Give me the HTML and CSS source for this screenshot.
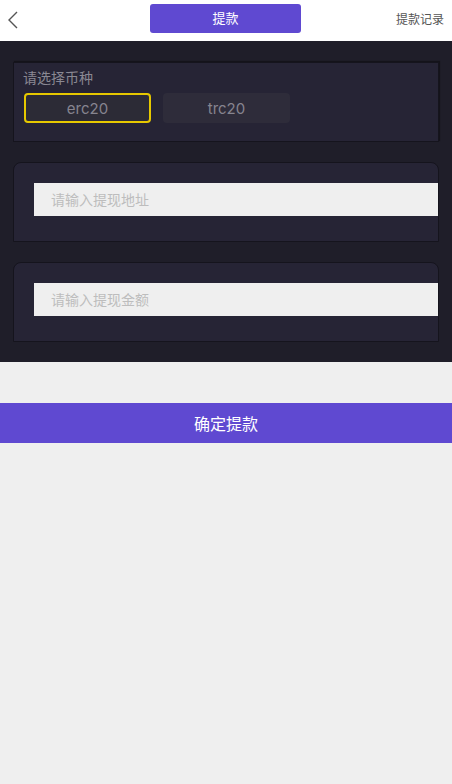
FILE: index.html
```html
<!DOCTYPE html>
<html lang="zh">
<head>
  <meta charset="UTF-8" />
  <meta name="viewport" content="width=device-width, initial-scale=1.0"/>
  <title>提款</title>
  <link rel="stylesheet" href="styles.css">
</head>
<body>
  <div class="header">
    <a class="back" href="#">
      <svg width="12" height="18" viewBox="0 0 12 18"><path d="M10 1 L2 9 L10 17" fill="none" stroke="#555" stroke-width="1.4"/></svg>
    </a>
    <div class="tab">提款</div>
    <a class="record" href="#">提款记录</a>
  </div>

  <div class="panel">
    <div class="card coin-card">
      <div class="label">请选择币种</div>
      <div class="coins">
        <button class="coin active">erc20</button>
        <button class="coin">trc20</button>
      </div>
    </div>

    <div class="card">
      <input type="text" class="field" placeholder="请输入提现地址" />
    </div>

    <div class="card">
      <input type="text" class="field" placeholder="请输入提现金额" />
    </div>
  </div>

  <button class="submit">确定提款</button>
</body>
</html>
```

FILE: styles.css
```css
body {
  margin: 0;
  background: #efefef;
  font-family: "Liberation Sans", "Noto Sans CJK SC", sans-serif;
}

.header {
  height: 41px;
  background: #fff;
  display: flex;
  align-items: center;
  justify-content: space-between;
  padding: 0 8px 0 7px;
  box-sizing: border-box;
}

.back {
  display: flex;
  width: 143px;
  padding-bottom: 2px;
}

.tab {
  width: 151px;
  height: 29px;
  margin-bottom: 4px;
  background: #5f49d1;
  border-radius: 3px;
  color: #fff;
  font-size: 13px;
  line-height: 29px;
  text-align: center;
}

.record {
  width: 143px;
  text-align: right;
  color: #555;
  font-size: 12px;
  text-decoration: none;
  padding-bottom: 4px;
}

.panel {
  background: #1f1e29;
  padding: 21px 13px 20px 13px;
  display: flex;
  flex-direction: column;
  gap: 20px;
}

.card {
  height: 80px;
  box-sizing: border-box;
  background: #262435;
  border: 1px solid #15141d;
  border-radius: 8px 8px 0 0;
  display: flex;
  align-items: flex-start;
  padding: 20px 0 0 20px;
}

.coin-card {
  border-radius: 0;
  flex-direction: column;
  padding: 6px 0 0 9px;
  box-shadow: 1px -1px 1px rgba(0, 0, 0, 0.35);
}

.label {
  color: #8a8893;
  font-size: 14px;
  line-height: 18px;
}

.coins {
  display: flex;
  gap: 12px;
  margin-top: 6px;
  padding-left: 1px;
}

.coin {
  width: 127px;
  height: 30px;
  background: #2e2c3a;
  border: none;
  border-radius: 4px;
  color: #86848f;
  font-family: "Inter", "Liberation Sans", sans-serif;
  font-size: 15px;
  padding: 0;
}

.coin.active {
  border: 2px solid #e6c800;
  background: #2c2b36;
}

.field {
  flex: 1;
  height: 33px;
  border: none;
  background: #efefef;
  padding: 0 0 0 17px;
  font-family: "Liberation Sans", "Noto Sans CJK SC", sans-serif;
  font-size: 14px;
  outline: none;
}

.field::placeholder {
  color: #bdbdbd;
}

.submit {
  display: block;
  width: 100%;
  height: 40px;
  margin-top: 41px;
  background: #5f49d1;
  border: none;
  color: #fff;
  font-family: "Liberation Sans", "Noto Sans CJK SC", sans-serif;
  font-size: 16px;
}
```
